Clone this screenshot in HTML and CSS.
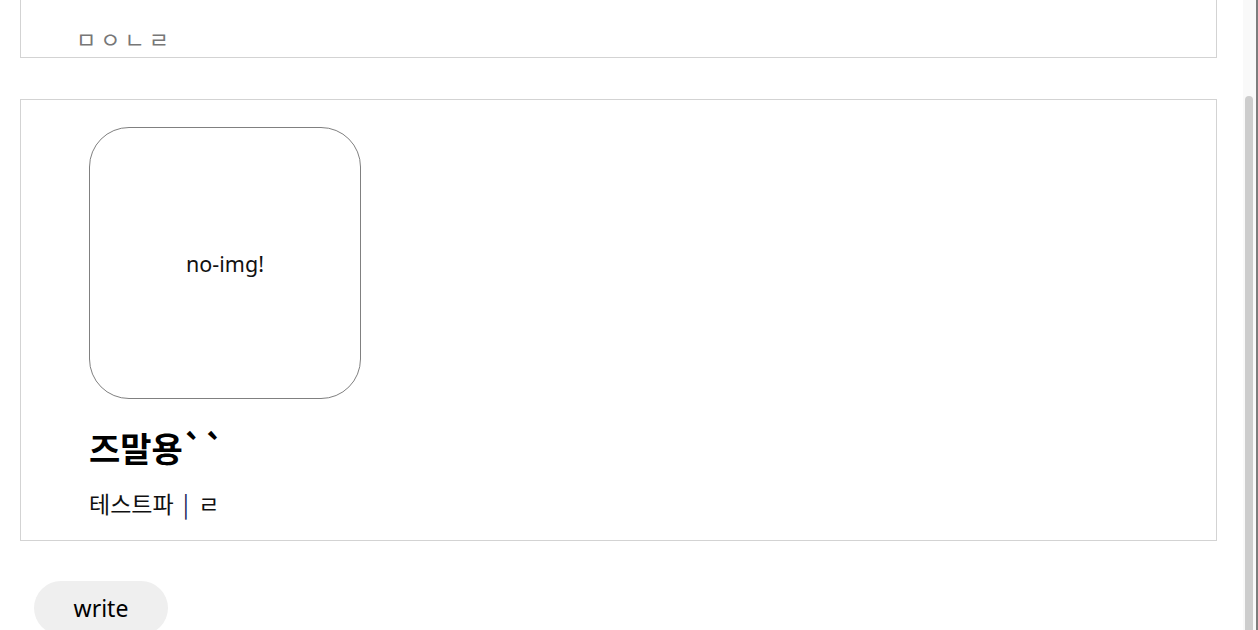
FILE: index.html
```html
<!DOCTYPE html>
<html>
<head>
  <title>게시판</title>
  <link rel="stylesheet" href="styles.css">
</head>
<body>
  <div class="list">
    <!-- 이전 글 (위쪽 잘림) -->
    <div class="post post-cut">
      <p class="post-empty">ㅁㅇㄴㄹ</p>
    </div>

    <!-- 글 카드 -->
    <div class="post">
      <div class="thumb">no-img!</div>
      <h2 class="post-title">즈말용``</h2>
      <p class="post-meta">테스트파 <span class="sep">|</span> ㄹ</p>
    </div>
  </div>

  <button class="write-btn">write</button>

  <div class="scrollbar"><div class="scroll-thumb"></div></div>
</body>
</html>
```

FILE: styles.css
```css
body {
  font-family: 'Noto Sans', 'Noto Sans CJK KR', sans-serif;
  margin: 0;
  padding: 0;
  background-color: #fff;
  color: #111;
}

.list {
  width: 1197px;
  margin-left: 20px;
}

.post {
  border: 1px solid #d3d3d3;
  padding: 27px 0 22px 68px;
  margin-top: 41px;
}

.post-cut {
  border-top: none;
  margin-top: 0;
  height: 58px;
  padding: 0 0 0 55px;
  box-sizing: border-box;
  display: flex;
  align-items: flex-end;
}

.post-empty {
  margin: 0 0 6px;
  font-family: 'Noto Sans CJK KR', sans-serif;
  font-size: 22px;
  line-height: 26px;
  letter-spacing: 4px;
  color: #777;
}

.thumb {
  width: 272px;
  height: 272px;
  box-sizing: border-box;
  border: 1px solid #808080;
  border-radius: 40px;
  display: flex;
  align-items: center;
  justify-content: center;
  font-size: 21.5px;
}

.post-title {
  margin: 30px 0 0;
  font-family: 'Noto Sans CJK KR', sans-serif;
  font-size: 34px;
  line-height: 38px;
  font-weight: bold;
  color: #000;
}

.post-meta {
  margin: 21px 0 0;
  font-family: 'Noto Sans CJK KR', sans-serif;
  font-size: 23px;
  line-height: 30px;
}

.sep {
  margin: 0 4px;
  color: #1c1c5a;
}

.write-btn {
  display: block;
  margin: 40px 0 0 34px;
  width: 134px;
  height: 54px;
  border: none;
  border-radius: 27px;
  background-color: #efefef;
  font-family: 'Noto Sans', sans-serif;
  font-size: 23px;
  color: #000;
  cursor: pointer;
}

.scrollbar {
  position: fixed;
  top: 0;
  right: 0;
  width: 13px;
  height: 100%;
  background-color: #f9f9f9;
  border-right: 2px solid #7d7d7d;
}

.scroll-thumb {
  position: absolute;
  top: 96px;
  bottom: 0;
  left: 2px;
  width: 8px;
  border-radius: 4px 4px 0 0;
  background-color: #cdcdcd;
}
```
